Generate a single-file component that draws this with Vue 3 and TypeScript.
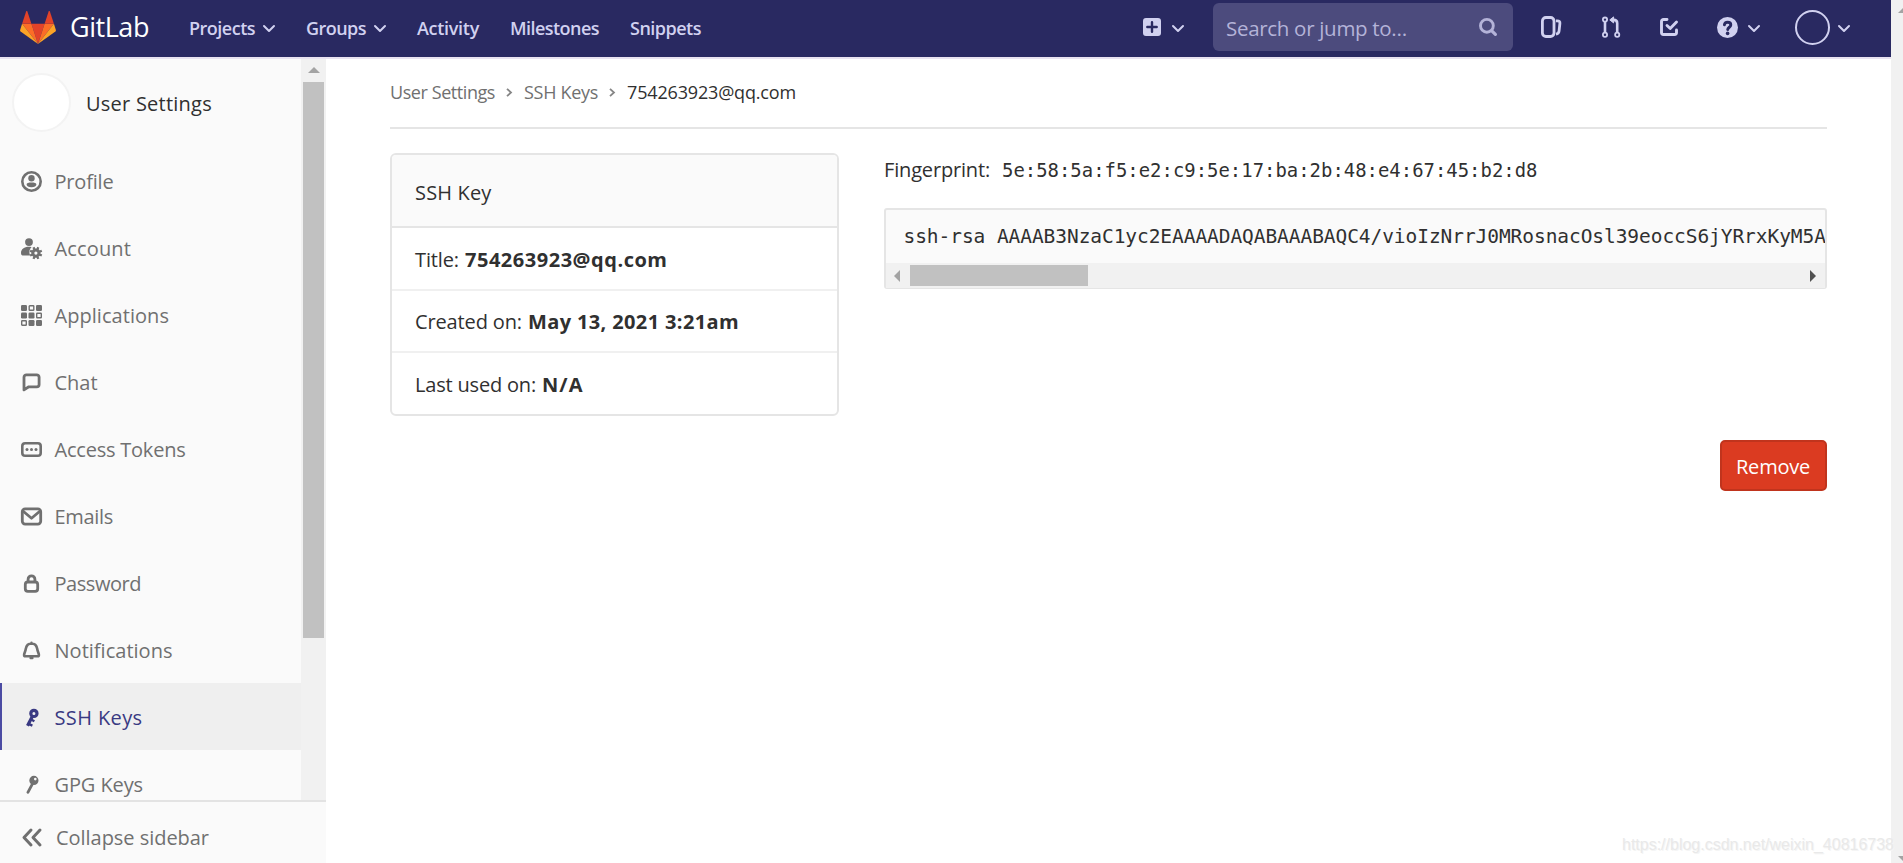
<script setup lang="ts">
interface NavItem { label: string; icon: string; width: number; active?: boolean }
interface TopLink { label: string; width: number; menu?: boolean }
interface KeyRow { label: string; value: string; labelWidth: number; valueWidth: number }

const topLinks: TopLink[] = [
  { label: 'Projects', width: 66, menu: true },
  { label: 'Groups', width: 60, menu: true },
  { label: 'Activity', width: 62 },
  { label: 'Milestones', width: 89 },
  { label: 'Snippets', width: 71 },
]

const items: NavItem[] = [
  { label: 'Profile', icon: 'profile', width: 59 },
  { label: 'Account', icon: 'account', width: 76.5 },
  { label: 'Applications', icon: 'apps', width: 114.5 },
  { label: 'Chat', icon: 'chat', width: 43 },
  { label: 'Access Tokens', icon: 'token', width: 131 },
  { label: 'Emails', icon: 'mail', width: 58.5 },
  { label: 'Password', icon: 'lock', width: 86.5 },
  { label: 'Notifications', icon: 'bell', width: 118 },
  { label: 'SSH Keys', icon: 'key', width: 88, active: true },
  { label: 'GPG Keys', icon: 'gpg', width: 88.5 },
]

const rows: KeyRow[] = [
  { label: 'Title:', value: '754263923@qq.com', labelWidth: 44, valueWidth: 202.5 },
  { label: 'Created on:', value: 'May 13, 2021 3:21am', labelWidth: 107, valueWidth: 211 },
  { label: 'Last used on:', value: 'N/A', labelWidth: 121, valueWidth: 41.5 },
]

const sshKey = 'ssh-rsa AAAAB3NzaC1yc2EAAAADAQABAAABAQC4/vioIzNrrJ0MRosnacOsl39eoccS6jYRrxKyM5A'

// Spreads the tracking of a label so that it fills the given width.
const vFit = {
  mounted(el: HTMLElement, binding: { value: number }) {
    const natural = el.getBoundingClientRect().width
    const count = (el.textContent ?? '').trim().length
    if (count > 0) el.style.letterSpacing = `${((binding.value - natural) / count).toFixed(3)}px`
  },
}
</script>

<template>
  <div class="page">
    <div class="view">
      <header class="topbar">
        <a class="brand">
          <svg class="logo" viewBox="0 0 36 33">
            <path fill="#e24329" d="M18 33 24.6 12.700H11.400z" />
            <path fill="#fc6d26" d="M18 33 11.400 12.700H2.100z" />
            <path fill="#fca326" d="M2.100 12.700.100 18.900a1.400 1.400 0 0 0 .500 1.500L18 33z" />
            <path fill="#e24329" d="M2.100 12.700h9.300L7.400.500C7.200-.100 6.300-.100 6.100.500z" />
            <path fill="#fc6d26" d="m18 33 6.600-20.300h9.300z" />
            <path fill="#fca326" d="m33.900 12.700 2 6.200a1.400 1.400 0 0 1-.5 1.500L18 33z" />
            <path fill="#e24329" d="M33.900 12.700h-9.300L28.600.500c.2-.6 1.100-.6 1.300 0z" />
          </svg>
          <span v-fit="79" class="brand-name">GitLab</span>
        </a>
        <nav class="links">
          <a v-for="link in topLinks" :key="link.label" class="link">
            <span v-fit="link.width">{{ link.label }}</span>
            <svg v-if="link.menu" class="caret" viewBox="0 0 12 7"><path d="m1 1 5 5 5-5" /></svg>
          </a>
        </nav>
        <div class="tools">
          <a class="tool plus">
            <svg class="i18" viewBox="0 0 18 18"><path fill="currentColor" fill-rule="evenodd" d="M3 0h12a3 3 0 0 1 3 3v12a3 3 0 0 1-3 3H3a3 3 0 0 1-3-3V3a3 3 0 0 1 3-3zm4.800 4.300v3.500H4.300a1.200 1.200 0 0 0 0 2.400h3.500v3.500a1.200 1.200 0 0 0 2.400 0v-3.500h3.500a1.200 1.200 0 0 0 0-2.400h-3.500V4.300a1.200 1.200 0 0 0-2.400 0z" /></svg>
            <svg class="caret" viewBox="0 0 12 7"><path d="m1 1 5 5 5-5" /></svg>
          </a>
          <div class="search">
            <span v-fit="181">Search or jump to…</span>
            <svg class="i18" viewBox="0 0 18 18" fill="none" stroke="currentColor"><circle cx="7.900" cy="7.800" r="6.400" stroke-width="2.900" /><path stroke-width="3.200" stroke-linecap="round" d="m12.800 12.800 3.600 3.600" /></svg>
          </div>
          <a class="tool issues">
            <svg viewBox="0 0 21 22" fill="none" stroke="currentColor" stroke-width="2.800"><rect x="1.400" y="1.500" width="11.600" height="19" rx="3.500" /><path stroke-linecap="butt" d="M15 4.800h1.400c1.800 0 2.700.9 2.500 2.600l-.8 7.400c-.2 2-1 3-3.100 3.400" /></svg>
          </a>
          <a class="tool merges">
            <svg viewBox="0 0 18 22" fill="none" stroke="currentColor" stroke-width="1.800"><circle cx="3" cy="3.600" r="2.100" /><circle cx="3" cy="18.800" r="2.100" /><circle cx="15.200" cy="18.800" r="2.100" /><path stroke-width="2.600" d="M3 6v10.500M15.200 16.500V7.200c0-2-1.200-3.300-3.600-3.300" /><path fill="currentColor" stroke-width="1" stroke-linejoin="round" d="M11.600.900v6L7.800 3.900z" /></svg>
          </a>
          <a class="tool todos">
            <svg class="i18" viewBox="0 0 18 18" fill="none" stroke="currentColor" stroke-width="2.900" stroke-linecap="round" stroke-linejoin="round"><path d="M7 1.500H3.500a2 2 0 0 0-2 2v11a2 2 0 0 0 2 2h11a2 2 0 0 0 2-2V12" /><path d="m7 7.500 3.200 3L16.500 4" /></svg>
          </a>
          <a class="tool help">
            <svg viewBox="0 0 21 21"><circle cx="10.500" cy="10.500" r="10.500" fill="currentColor" /><path fill="none" stroke="#292961" stroke-width="2.900" stroke-linecap="round" d="M7.400 7.800c.2-1.700 1.400-2.600 3.200-2.600s3.200 1 3.200 2.700c0 2.400-3 2.300-3.100 4.700" /><circle cx="10.600" cy="16.400" r="1.800" fill="#292961" /></svg>
            <svg class="caret" viewBox="0 0 12 7"><path d="m1 1 5 5 5-5" /></svg>
          </a>
          <a class="tool user">
            <span class="user-avatar"></span>
            <svg class="caret" viewBox="0 0 12 7"><path d="m1 1 5 5 5-5" /></svg>
          </a>
        </div>
      </header>

      <div class="body">
        <aside class="sidebar">
          <div class="side-scroll">
            <div class="side-list">
              <div class="context">
                <span class="context-avatar"></span>
                <span v-fit="126" class="context-title">User Settings</span>
              </div>
              <a v-for="item in items" :key="item.label" class="item" :class="{ active: item.active }">
                <svg class="icon" viewBox="0 0 21 21" fill="none" stroke="currentColor" stroke-linecap="round" stroke-linejoin="round">
                  <template v-if="item.icon === 'profile'">
                    <circle cx="10.500" cy="10.500" r="9.200" stroke-width="2.600" />
                    <circle cx="10.500" cy="7.300" r="3.200" fill="currentColor" stroke="none" />
                    <path fill="currentColor" stroke="none" d="M5.600 13.500c0-1.400 2-2 4.900-2s4.900.6 4.900 2c0 1.600-2 2.800-4.900 2.800s-4.900-1.200-4.900-2.800z" />
                  </template>
                  <template v-else-if="item.icon === 'account'">
                    <circle cx="8" cy="4.100" r="3.900" fill="currentColor" stroke="none" />
                    <path fill="currentColor" stroke="none" d="M0 15c0-3.700 3.200-6.200 7.900-6.200 1 0 1.900.1 2.700.4-1.600 1.300-2.200 3-2.200 5 0 1.300.3 2.400.9 3.400H2.500C.9 17.600 0 16.900 0 15z" />
                    <circle cx="14.900" cy="15.100" r="3.100" stroke-width="3" />
                    <path stroke-width="2.300" stroke-linecap="butt" d="m12.500 9.300 1 2.300M17.300 9.300l-1 2.300M20.800 12.700l-2.400 1M20.800 17.500l-2.400-1M17.300 20.900l-1-2.300M12.500 20.900l1-2.300M9.100 17.500l2.400-1M9.100 12.700l2.400 1" />
                  </template>
                  <template v-else-if="item.icon === 'apps'">
                    <g fill="currentColor" stroke="none"><rect width="6" height="6" rx="1.200" /><rect x="15" width="6" height="6" rx="1.200" /><rect y="7.500" width="6" height="6" rx="1.200" /><rect x="7.500" y="7.500" width="6" height="6" rx="1.200" /><rect x="7.500" y="15" width="6" height="6" rx="1.200" /><rect x="15" y="15" width="6" height="6" rx="1.200" /></g>
                    <g stroke-width="1.400"><rect x="8.200" y=".7" width="4.600" height="4.600" rx=".6" /><rect x="15.700" y="8.200" width="4.600" height="4.600" rx=".6" /><rect x=".7" y="15.700" width="4.600" height="4.600" rx=".6" /></g>
                  </template>
                  <path v-else-if="item.icon === 'chat'" stroke-width="2.800" d="M3 17.900V5.200a2.400 2.400 0 0 1 2.400-2.400h10.300a2.400 2.400 0 0 1 2.400 2.400v7.200a2.400 2.400 0 0 1-2.400 2.400H7.800z" />
                  <template v-else-if="item.icon === 'token'">
                    <rect x="1.300" y="4.200" width="18.400" height="12.600" rx="2.800" stroke-width="2.600" />
                    <g fill="currentColor" stroke="none"><circle cx="6" cy="10.500" r="1.500" /><circle cx="10.500" cy="10.500" r="1.500" /><circle cx="15" cy="10.500" r="1.500" /></g>
                  </template>
                  <g v-else-if="item.icon === 'mail'" stroke-width="2.800"><rect x="1.300" y="2.900" width="18.400" height="15.200" rx="2.800" /><path d="m2.200 5.200 8.300 7 8.300-7" /></g>
                  <g v-else-if="item.icon === 'lock'" stroke-width="2.800"><rect x="4.300" y="9" width="12.400" height="9.300" rx="2.500" /><path d="M7.100 8.500V6.200a3.400 3.400 0 0 1 6.800 0v2.300" /></g>
                  <g v-else-if="item.icon === 'bell'"><path stroke-width="2.600" d="M10.500 3.500c-3.400 0-5.100 2-5.700 5.300-.4 2.700-1.700 4.500-1.700 6.200 0 .9.500 1.300 1.300 1.300h12.200c.8 0 1.300-.4 1.300-1.300 0-1.700-1.300-3.500-1.700-6.200-.6-3.300-2.300-5.300-5.700-5.300z" /><path stroke-width="2.400" d="M10.500 2.600v.5M9.600 18h1.800" /></g>
                  <g v-else-if="item.icon === 'key'"><circle cx="12.900" cy="6.400" r="3.100" stroke-width="3.200" /><path stroke-width="3.200" stroke-linecap="butt" d="m11.300 9.500-4.800 9.300" /><path stroke-width="2.400" stroke-linecap="butt" d="m9.600 12.300 3.800 2M7 16.700l4.400 2" /></g>
                  <g v-else><path stroke-width="2.800" d="m12 8.800-5.100 9.500" /><path fill="currentColor" fill-rule="evenodd" stroke="none" d="M12.900 1.800a4.600 4.600 0 1 1 0 9.200 4.600 4.600 0 0 1 0-9.200zm1.400 2a1.300 1.300 0 1 0 0 2.600 1.300 1.300 0 0 0 0-2.600z" /></g>
                </svg>
                <span v-fit="item.width">{{ item.label }}</span>
              </a>
            </div>
            <div class="vbar">
              <svg viewBox="0 0 12 6"><path d="M0 6 6 0l6 6z" /></svg>
              <i></i>
            </div>
          </div>
          <a class="collapse">
            <svg viewBox="0 0 20 19"><path d="M9 2 2 9.500 9 17M18 2l-7 7.500L18 17" /></svg>
            <span v-fit="153">Collapse sidebar</span>
          </a>
        </aside>

        <main class="content">
          <div class="crumbs">
            <span v-fit="105">User Settings</span>
            <svg viewBox="0 0 6 9"><path d="m1 .8 4 3.700-4 3.700" /></svg>
            <span v-fit="74">SSH Keys</span>
            <svg viewBox="0 0 6 9"><path d="m1 .8 4 3.700-4 3.700" /></svg>
            <strong v-fit="169">754263923@qq.com</strong>
          </div>
          <div class="columns">
            <section class="card">
              <div class="card-head"><span v-fit="76.500">SSH Key</span></div>
              <div v-for="row in rows" :key="row.label" class="card-row">
                <span v-fit="row.labelWidth">{{ row.label }}</span>
                <strong v-fit="row.valueWidth">{{ row.value }}</strong>
              </div>
            </section>
            <section class="detail">
              <p class="fingerprint">
                <span v-fit="106">Fingerprint:</span>
                <code v-fit="535.500">5e:58:5a:f5:e2:c9:5e:17:ba:2b:48:e4:67:45:b2:d8</code>
              </p>
              <div class="keybox">
                <div class="keytext">{{ sshKey }}</div>
                <div class="hbar">
                  <svg viewBox="0 0 6 12"><path fill="#a3a3a3" d="M6 0v12L0 6z" /></svg>
                  <i></i>
                  <svg class="right" viewBox="0 0 6 12"><path fill="#505050" d="M0 0v12l6-6z" /></svg>
                </div>
              </div>
              <button class="remove"><span v-fit="74">Remove</span></button>
            </section>
          </div>
        </main>
      </div>
    </div>
    <div class="page-bar">
      <svg viewBox="0 0 12 6"><path d="M0 6 6 0l6 6z" /></svg>
      <svg viewBox="0 0 12 6"><path d="M0 0h12L6 6z" /></svg>
    </div>
    <div v-fit="272" class="watermark">https://blog.csdn.net/weixin_40816738</div>
  </div>
</template>

<style>
html, body { margin: 0; overflow: hidden; background: #fff; }
</style>

<style scoped>
.page { position: relative; display: flex; width: 1903px; height: 863px; overflow: hidden; background: #fff; color: #303030; font: 20px/30px "Open Sans", "Noto Sans", sans-serif; }
.page * { box-sizing: border-box; }
svg { display: block; flex: none; overflow: visible; }
span, strong, code { white-space: nowrap; flex: none; }
.view { display: flex; flex-direction: column; width: 1891px; }
.page-bar { display: flex; flex-direction: column; justify-content: space-between; width: 12px; padding: 7px 0 1px 7px; background: #f1f1f1; overflow: hidden; }
.page-bar svg { width: 12px; height: 6px; fill: #a3a3a3; }

.topbar { display: flex; align-items: center; flex: none; height: 59px; padding: 0 40px 3px 20px; border-bottom: 2px solid #e8e2f0; background: #292961; background-clip: padding-box; color: #d1d1f0; }
.brand { display: flex; align-items: center; width: 169px; }
.logo { width: 36px; height: 33px; margin-right: 14px; }
.brand-name { color: #fff; font-size: 27px; line-height: 36px; }
.links { display: flex; gap: 31px; font-size: 18px; font-weight: 600; }
.link { display: flex; align-items: center; }
.link span { padding-top: 1px; }
.caret { width: 12px; height: 7px; margin: 3px 1px 0 8px; fill: none; stroke: currentColor; stroke-width: 2; stroke-linecap: round; stroke-linejoin: round; }
.link .caret { margin-right: 0; }
.tools { display: flex; align-items: center; margin-left: auto; }
.tool { display: flex; align-items: center; }
.i18 { width: 18px; height: 18px; }
.plus { margin-right: 28px; }
.plus .caret { margin-left: 11px; }
.search { display: flex; align-items: center; justify-content: space-between; width: 300px; height: 48px; padding: 0 16px 0 13px; border-radius: 6px; background: #4c4b7d; color: #b4b3d8; font-size: 20.500px; }
.search span { padding-top: 1px; }
.issues { width: 21px; margin-left: 28px; }
.issues svg { width: 21px; height: 22px; }
.merges { width: 18px; margin-left: 40px; }
.merges svg { width: 18px; height: 22px; }
.todos { margin-left: 40px; }
.help { margin-left: 39px; }
.help svg:first-child { width: 21px; height: 21px; }
.help .caret { margin-left: 10px; }
.user { margin-left: 34px; }
.user-avatar { width: 35px; height: 35px; border: 2px solid #d1d1f0; border-radius: 50%; }

.body { display: flex; flex: 1; min-height: 0; }
.sidebar { display: flex; flex-direction: column; width: 326px; background: #fafafa; color: #707070; }
.side-scroll { display: flex; height: 741px; overflow: hidden; }
.side-list { width: 301px; }
.context { display: flex; align-items: center; height: 88px; padding: 0 0 2px 12px; }
.context-avatar { width: 59px; height: 59px; margin-right: 15px; border: 2px solid #f3f3f3; border-radius: 50%; background: #fff; }
.context-title { color: #303030; font-weight: 500; padding-top: 3px; }
.item { display: flex; align-items: center; height: 67px; padding: 1px 0 0 20.500px; }
.item span { padding-top: 1px; }
.item.active { padding-left: 18.500px; border-left: 2px solid #4b4ba3; background: #efefef; color: #393982; font-weight: 500; }
.icon { width: 21px; height: 21px; margin-right: 13px; }
.vbar { display: flex; flex-direction: column; align-items: center; width: 25px; padding-top: 8px; background: #f1f1f1; }
.vbar svg { width: 12px; height: 6px; fill: #a3a3a3; }
.vbar i { width: 21px; height: 556px; margin-top: 9px; background: #c1c1c1; }
.collapse { display: flex; align-items: center; flex: 1; padding: 10px 0 0 22px; border-top: 2px solid #e3e3e3; }
.collapse svg { width: 20px; height: 19px; margin-right: 14px; fill: none; stroke: currentColor; stroke-width: 3; stroke-linecap: round; stroke-linejoin: round; }

.content { flex: 1; padding: 0 64px; }
.crumbs { display: flex; align-items: center; height: 70px; padding-bottom: 2px; border-bottom: 2px solid #e5e5e5; color: #707070; font-size: 18px; }
.crumbs svg { width: 6px; height: 9px; margin: 0 12px 0 11px; fill: none; stroke: #868686; stroke-width: 1.800; }
.crumbs strong { color: #303030; font-weight: 500; }
.columns { display: flex; align-items: flex-start; gap: 45px; margin-top: 24px; }
.card { width: 449px; border: 2px solid #e5e5e5; border-radius: 6px; overflow: hidden; }
.card-head { display: flex; align-items: center; height: 73px; padding: 4px 23px 0; border-bottom: 2px solid #e5e5e5; background: #fafafa; }
.card-row { display: flex; align-items: center; gap: 6px; height: 62.500px; padding: 3px 0 0 23px; border-bottom: 2px solid #f0f0f0; }
.card-row:last-child { height: 61px; border-bottom: 0; }
.card-row strong { font-weight: 700; }
.detail { display: flex; flex-direction: column; width: 943px; }
.fingerprint { display: flex; align-items: center; gap: 12px; height: 34px; margin: 0; }
code { font: 18.900px/30px "DejaVu Sans Mono", monospace; }
.keybox { height: 81px; margin-top: 21px; border: 2px solid #e5e5e5; border-bottom-width: 1px; border-radius: 3px; background: #fafafa; overflow: hidden; }
.keytext { height: 53px; padding: 12px 0 0 17.500px; font: 19.500px/30px "DejaVu Sans Mono", monospace; letter-spacing: -0.065px; white-space: nowrap; overflow: hidden; }
.hbar { display: flex; align-items: center; height: 25px; padding: 0 9px 0 8px; background: #f1f1f1; }
.hbar svg { width: 6px; height: 12px; }
.hbar i { width: 178px; height: 21px; margin-left: 10px; background: #c1c1c1; }
.hbar .right { margin-left: auto; }
.remove { align-self: flex-end; width: 107px; height: 51px; margin-top: 151px; padding: 3px 1px 0 0; border: 2px solid #c0341d; border-radius: 5px; background: #db3b21; color: #fff; font: inherit; }
.watermark { position: absolute; left: 1622px; top: 835px; color: #e9e9e9; font: 16px/20px "Liberation Sans", Arial, sans-serif; white-space: nowrap; text-shadow: 1px 1px 0 #f5f5f5; }
</style>
